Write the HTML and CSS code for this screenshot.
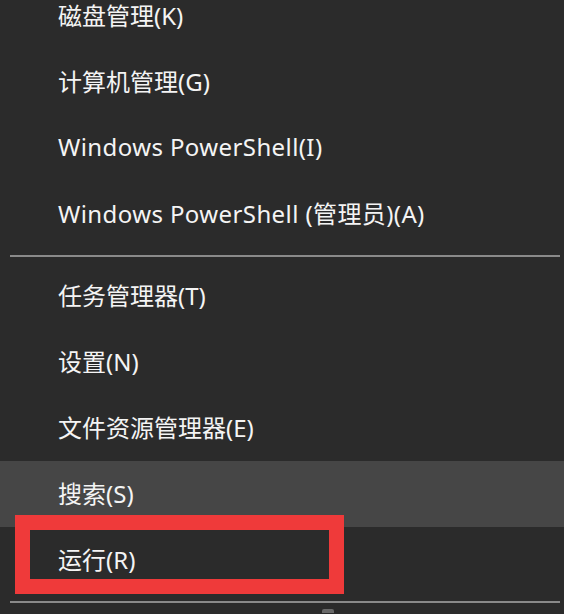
FILE: index.html
```html
<!DOCTYPE html>
<html lang="zh-CN">
<head>
<meta charset="utf-8">
<title>Win+X 菜单</title>
<link rel="stylesheet" href="styles.css">
</head>
<body>
<div class="menu">
  <ul class="group first">
    <li class="item">磁盘管理(K)</li>
    <li class="item">计算机管理(G)</li>
    <li class="item wide">Windows PowerShell(I)</li>
    <li class="item wide">Windows PowerShell (管理员)(A)</li>
  </ul>
  <div class="sep"></div>
  <ul class="group">
    <li class="item">任务管理器(T)</li>
    <li class="item">设置(N)</li>
    <li class="item">文件资源管理器(E)</li>
    <li class="item hover">搜索(S)</li>
    <li class="item marked">运行(R)<span class="highlight"></span></li>
  </ul>
  <div class="sep"></div>
  <div class="peek"></div>
</div>
</body>
</html>
```

FILE: styles.css
```css
html, body {
  margin: 0;
  padding: 0;
  background: #2b2b2b;
  overflow: hidden;
}
.menu {
  width: 564px;
  height: 614px;
  overflow: hidden;
  font-family: "Noto Sans", "Noto Sans CJK SC", sans-serif;
  font-size: 24px;
  color: #f4f4f4;
}
.group {
  list-style: none;
  margin: 0;
  padding: 0;
}
.group.first {
  margin-top: -17px;
}
.item {
  position: relative;
  height: 66px;
  box-sizing: border-box;
  padding: 0 0 4px 58px;
  display: flex;
  align-items: center;
  white-space: nowrap;
}
.item.wide {
  letter-spacing: 0.4px;
}
.item.hover {
  background: #464646;
}
.highlight {
  position: absolute;
  left: 15px;
  top: -12px;
  width: 329px;
  height: 79px;
  box-sizing: border-box;
  border: 15px solid #ef3a3a;
}
.sep {
  height: 2px;
  background: #8a8a8a;
  margin: 8px 4px 6px 10px;
}
.peek {
  width: 12px;
  height: 4px;
  margin-left: 322px;
  margin-top: 3px;
  background: #6a6a6a;
  border-radius: 2px 2px 0 0;
}
```
